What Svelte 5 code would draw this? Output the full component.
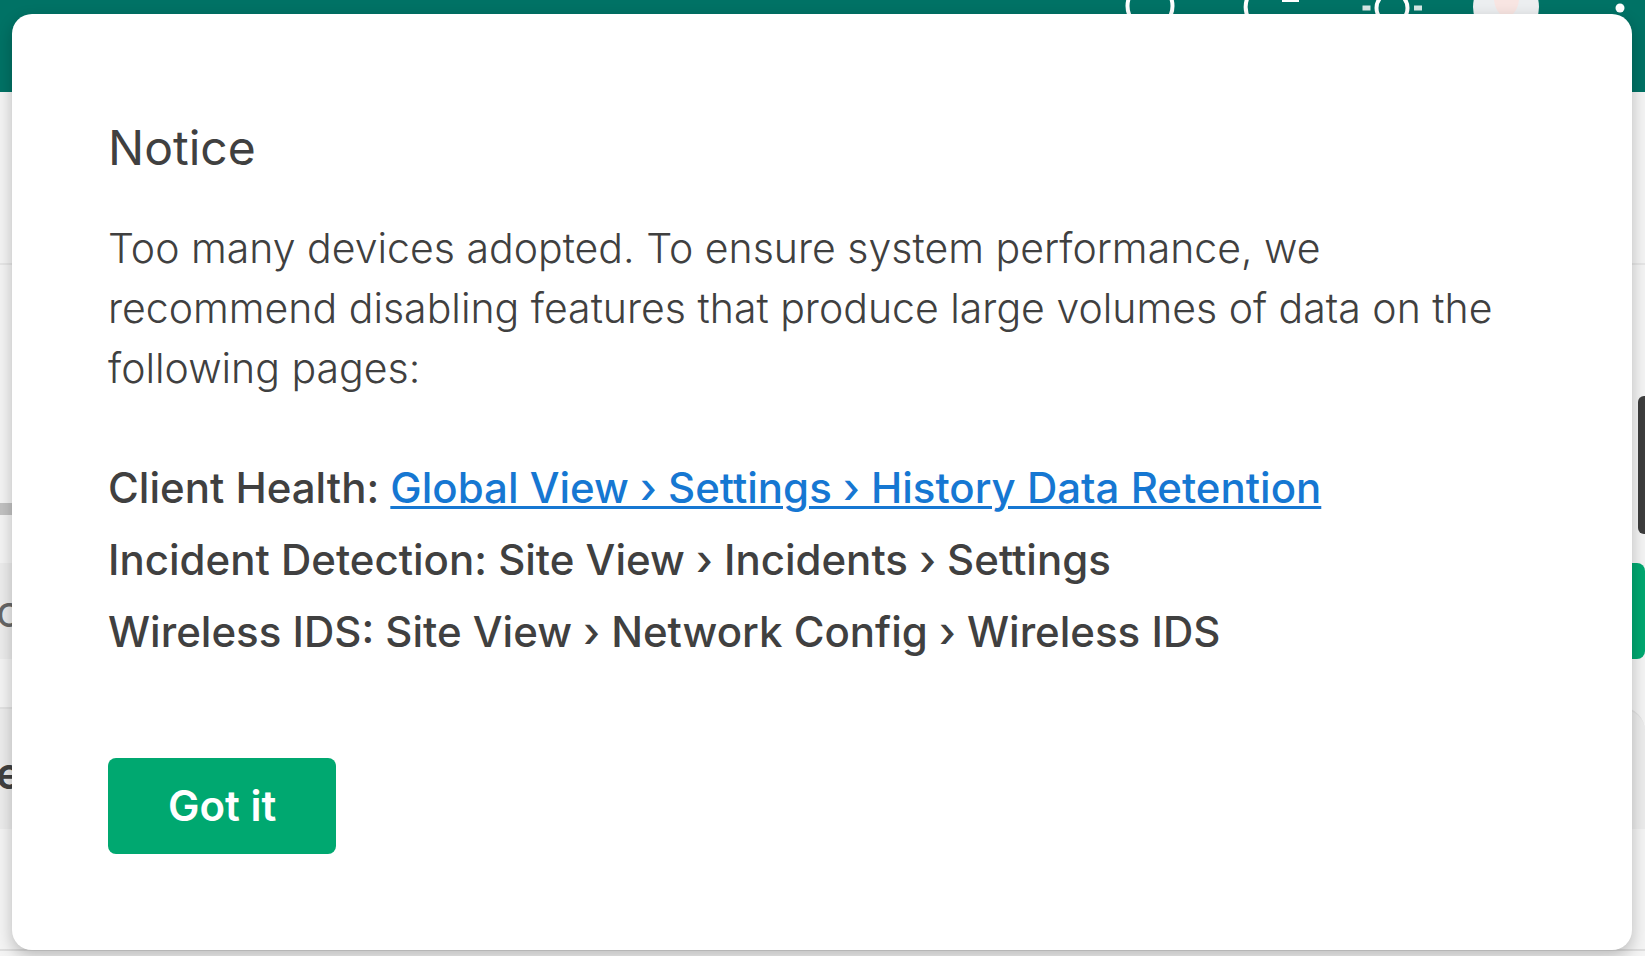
<script>
  let open = $state(true);
  const pages = [
    { feature: 'Client Health', path: 'Global View › Settings › History Data Retention', link: true },
    { feature: 'Incident Detection', path: 'Site View › Incidents › Settings', link: false },
    { feature: 'Wireless IDS', path: 'Site View › Network Config › Wireless IDS', link: false }
  ];
</script>

<div class="page">
  <div class="backdrop">
    <header class="topbar">
      <button class="tool" aria-label="Search">
        <svg width="68" height="40" viewBox="0 0 68 40"><circle cx="35" cy="6" r="22.5" fill="none" stroke="#fff" stroke-width="4" /></svg>
      </button>
      <button class="tool" aria-label="Messages">
        <svg width="68" height="40" viewBox="0 0 68 40"><path d="M14 -5a23 23 0 0 0 0 24" fill="none" stroke="#fff" stroke-width="4" /><path d="M47 0h17" stroke="#fff" stroke-width="4" /></svg>
      </button>
      <button class="tool" aria-label="Appearance">
        <svg width="68" height="40" viewBox="0 0 68 40"><circle cx="37" cy="8" r="15.5" fill="none" stroke="#fff" stroke-width="4" /><path d="M7.500 8h8M59 8h8" stroke="#d5e8e5" stroke-width="5" /></svg>
      </button>
      <button class="tool" aria-label="Account">
        <svg width="68" height="40" viewBox="0 0 68 40"><circle cx="31" cy="7" r="33" fill="#eceef0" /><path d="M19 0h25q-1 9-6 14H25q-5-5-6-14z" fill="#f8e5e2" /></svg>
      </button>
      <button class="tool" aria-label="More">
        <svg width="50" height="40" viewBox="0 0 50 40"><circle cx="25" cy="8" r="4.500" fill="#fff" /></svg>
      </button>
    </header>
    <div class="heading"></div>
    <div class="tabs"><span class="tab"></span></div>
    <div class="filters">
      <span class="field">c</span>
      <span class="action"></span>
    </div>
    <div class="columns">e</div>
    <div class="body"></div>
    <div class="side"></div>
  </div>

  {#if open}
    <div class="modal" role="dialog" aria-labelledby="title">
      <h1 id="title">Notice</h1>
      <p>Too many devices adopted. To ensure system performance, we recommend disabling features that produce large volumes of data on the following pages:</p>
      <ul>
        {#each pages as page}
          <li>{page.feature}: {#if page.link}<a href="#retention">{page.path}</a>{:else}{page.path}{/if}</li>
        {/each}
      </ul>
      <button class="confirm" onclick={() => (open = false)}>Got it</button>
    </div>
  {/if}
</div>

<style>
  :global(body) {
    margin: 0;
  }
  .page {
    display: grid;
    min-height: 100vh;
    background: #f4f4f4;
    font-family: Inter, "Liberation Sans", sans-serif;
    color: #404040;
    overflow: hidden;
  }
  .backdrop,
  .modal {
    grid-area: 1 / 1;
    min-width: 0;
  }
  .backdrop {
    position: relative;
    display: flex;
    flex-direction: column;
    font-size: 44px;
    line-height: 56px;
  }
  .topbar {
    display: flex;
    justify-content: flex-end;
    align-items: flex-start;
    gap: 52px;
    height: 92px;
    background: #007265;
  }
  .tool {
    display: block;
    padding: 0;
    border: 0;
    background: none;
  }
  .tool svg {
    display: block;
    overflow: visible;
  }
  .heading {
    height: 171px;
    border-bottom: 2px solid #e6e6e6;
  }
  .tabs {
    display: flex;
    align-items: flex-end;
    height: 250px;
    margin-bottom: 48px;
  }
  .tab {
    width: 120px;
    height: 12px;
    background: #c2c2c2;
  }
  .filters {
    display: flex;
    justify-content: space-between;
    margin-bottom: 48px;
    background: linear-gradient(90deg, #ececec 50%, transparent 50%);
  }
  .field {
    padding: 20px 0;
    margin-left: -4px;
    color: #666;
  }
  .action {
    width: 120px;
    background: #00a870;
    border-radius: 8px;
  }
  .columns {
    padding: 36px 0 28px;
    border-top: 2px solid #e2e2e2;
    border-top-right-radius: 24px;
    background: #ececec;
    font-weight: 600;
    text-indent: -4px;
  }
  .body {
    height: 120px;
    border-bottom: 2px solid #dedede;
  }
  .side {
    position: absolute;
    right: 0;
    top: 396px;
    width: 7px;
    height: 138px;
    background: #3d3d3d;
    border-radius: 6px 0 0 6px;
  }
  .modal {
    position: relative;
    align-self: start;
    margin: 14px 13px 0 12px;
    padding: 104px 96px 96px;
    background: #fff;
    border-radius: 20px;
    box-shadow: 0 6px 16px rgba(0, 0, 0, 0.24);
  }
  h1 {
    margin: 0 0 40px;
    font-size: 48px;
    line-height: 60px;
    font-weight: 400;
  }
  p {
    margin: 0 0 54px;
    font-size: 41px;
    line-height: 60px;
    font-weight: 300;
  }
  ul {
    margin: 0 0 90px;
    padding: 0;
    list-style: none;
    font-size: 42px;
    line-height: 72px;
    font-weight: 500;
  }
  a {
    color: #1677d2;
    text-decoration-thickness: 3px;
    text-underline-offset: 3px;
  }
  .confirm {
    display: block;
    height: 96px;
    padding: 0 60px;
    border: 0;
    border-radius: 8px;
    background: #00a870;
    color: #fff;
    font: 600 42px/60px Inter, "Liberation Sans", sans-serif;
  }
</style>
